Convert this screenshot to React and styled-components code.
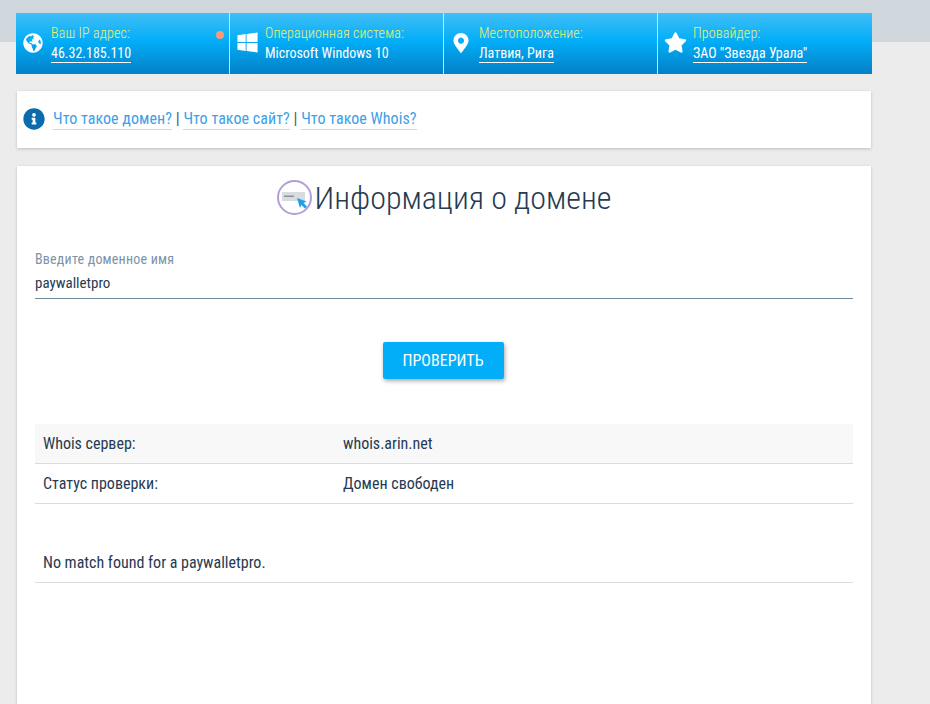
import React from 'react';
import styled, { createGlobalStyle } from 'styled-components';
import { FaGlobeAmericas, FaWindows, FaMapMarkerAlt, FaStar, FaInfoCircle } from 'react-icons/fa';

const GlobalStyle = createGlobalStyle`
  html, body {
    margin: 0;
    padding: 0;
    height: 704px;
    overflow: hidden;
  }
  body {
    background: linear-gradient(#cfd6dc 42px, #ececec 42px);
    font-family: Roboto, "Liberation Sans", sans-serif;
    color: #263a52;
  }
`;

const stats = [
  { label: 'Ваш IP адрес:', value: '46.32.185.110', icon: <FaGlobeAmericas size={20} />, link: true, dot: true },
  { label: 'Операционная система:', value: 'Microsoft Windows 10', icon: <FaWindows size={23} /> },
  { label: 'Местоположение:', value: 'Латвия, Рига', icon: <FaMapMarkerAlt size={20} />, link: true },
  { label: 'Провайдер:', value: 'ЗАО "Звезда Урала"', icon: <FaStar size={23} />, link: true },
];

const App = () => {
  return (
    <Page>
      <GlobalStyle />
      <InfoBar>
        {stats.map((item) => (
          <Stat key={item.label}>
            <StatIcon>{item.icon}</StatIcon>
            <StatText>
              <StatLabel>{item.label}</StatLabel>
              <StatValue $link={item.link}>{item.value}</StatValue>
            </StatText>
            {item.dot && <Dot />}
          </Stat>
        ))}
      </InfoBar>

      <HelpCard>
        <HelpIcon>
          <FaInfoCircle size={22} />
        </HelpIcon>
        <HelpLink>Что такое домен?</HelpLink>
        <Sep>|</Sep>
        <HelpLink>Что такое сайт?</HelpLink>
        <Sep>|</Sep>
        <HelpLink>Что такое Whois?</HelpLink>
      </HelpCard>

      <MainCard>
        <Title>
          <svg width="36" height="36" viewBox="0 0 36 36">
            <circle cx="17.500" cy="17.500" r="16.500" fill="#fff" stroke="#b39ddb" strokeWidth="2" />
            <rect x="5" y="12" width="23" height="9" fill="#d6dce0" />
            <rect x="7" y="15.500" width="10" height="1.500" fill="#8a939a" />
            <path d="M20 18l9.500 3.500-3 1.500 3.500 3.500-2 2-3.500-3.500-1.500 3z" fill="#1e9fe8" />
          </svg>
          <span>Информация о домене</span>
        </Title>

        <FieldLabel>Введите доменное имя</FieldLabel>
        <DomainInput defaultValue="paywalletpro" />

        <ButtonRow>
          <CheckButton>ПРОВЕРИТЬ</CheckButton>
        </ButtonRow>

        <Row $shaded>
          <RowKey>Whois сервер:</RowKey>
          <span>whois.arin.net</span>
        </Row>
        <Row>
          <RowKey>Статус проверки:</RowKey>
          <span>Домен свободен</span>
        </Row>
        <Message>No match found for a paywalletpro.</Message>
      </MainCard>
    </Page>
  );
};

export default App;

const Page = styled.div`
  width: 856px;
  margin-left: 16px;
  padding-top: 13px;
  font-stretch: 75%;
`;

const InfoBar = styled.div`
  display: grid;
  grid-template-columns: 213px 214px 214px 215px;
  height: 61px;
  background: linear-gradient(#41bef7 0%, #03aef8 45%, #0280c6 100%);
`;

const Stat = styled.div`
  position: relative;
  display: flex;
  align-items: center;
  padding-bottom: 2px;
  border-left: 1px solid #e4f07a;
  &:first-child {
    border-left: 0;
  }
`;

const StatIcon = styled.div`
  display: flex;
  justify-content: center;
  width: 34px;
  padding-right: 1px;
  flex: none;
  color: #fff;
`;

const StatText = styled.div`
  display: flex;
  flex-direction: column;
  align-items: flex-start;
`;

const StatLabel = styled.div`
  font-size: 14px;
  line-height: 20px;
  letter-spacing: 0.15px;
  color: #eef26a;
  font-weight: 300;
`;

const StatValue = styled.div`
  margin-top: 1px;
  font-size: 14px;
  line-height: 18px;
  color: #fff;
  border-bottom: 1px solid ${(p) => (p.$link ? '#fff' : 'transparent')};
`;

const Dot = styled.span`
  position: absolute;
  top: 18px;
  right: 5px;
  width: 8px;
  height: 8px;
  border-radius: 50%;
  background: #f59a7c;
`;

const HelpCard = styled.div`
  display: flex;
  align-items: center;
  gap: 3.750px;
  width: 854px;
  height: 57px;
  margin: 17px 0 18px 1px;
  box-sizing: border-box;
  padding: 0 0 2px 6px;
  background: #fff;
  box-shadow: 0 1px 3px rgba(0, 0, 0, 0.2);
`;

const HelpIcon = styled.div`
  display: flex;
  width: 26.250px;
  color: #0a6cad;
`;

const HelpLink = styled.a`
  font-size: 16px;
  line-height: 21px;
  letter-spacing: 0.05px;
  color: #3d9fe8;
  border-bottom: 1px solid #b5e2f5;
`;

const Sep = styled.span`
  font-size: 16px;
  color: #4a5a6a;
`;

const MainCard = styled.div`
  width: 854px;
  height: 560px;
  margin-left: 1px;
  box-sizing: border-box;
  padding: 12px 18px 0;
  background: #fff;
  box-shadow: 0 1px 3px rgba(0, 0, 0, 0.2);
`;

const Title = styled.h1`
  display: flex;
  align-items: center;
  justify-content: center;
  gap: 2px;
  margin: 0 0 32px;
  height: 40px;
  font-size: 32px;
  line-height: 36px;
  font-weight: 300;
  color: #263a52;
`;

const FieldLabel = styled.div`
  font-size: 14px;
  line-height: 18px;
  letter-spacing: 0.2px;
  color: #7d93a8;
`;

const DomainInput = styled.input`
  display: block;
  width: 100%;
  height: 31px;
  box-sizing: border-box;
  padding: 0;
  border: 0;
  border-bottom: 1px solid #6f8c9c;
  outline: none;
  font-family: inherit;
  font-stretch: inherit;
  font-size: 15px;
  color: #263a52;
`;

const ButtonRow = styled.div`
  display: flex;
  justify-content: center;
  margin: 43px 0 45px;
  padding-right: 2px;
`;

const CheckButton = styled.button`
  width: 121px;
  height: 37px;
  border: 0;
  border-radius: 2px;
  background: #03aef8;
  box-shadow: 1px 2px 4px rgba(0, 0, 0, 0.35);
  font-family: inherit;
  font-stretch: inherit;
  font-size: 16px;
  color: #fff;
`;

const Row = styled.div`
  display: flex;
  align-items: center;
  height: 40px;
  box-sizing: border-box;
  padding-left: 8px;
  font-size: 16px;
  background: ${(p) => (p.$shaded ? '#f8f8f8' : '#fff')};
  border-bottom: 1px solid #dcdcdc;
`;

const RowKey = styled.span`
  width: 300px;
`;

const Message = styled.div`
  margin-top: 39px;
  height: 40px;
  box-sizing: border-box;
  padding-left: 8px;
  font-size: 16px;
  line-height: 40px;
  border-bottom: 1px solid #dcdcdc;
`;
